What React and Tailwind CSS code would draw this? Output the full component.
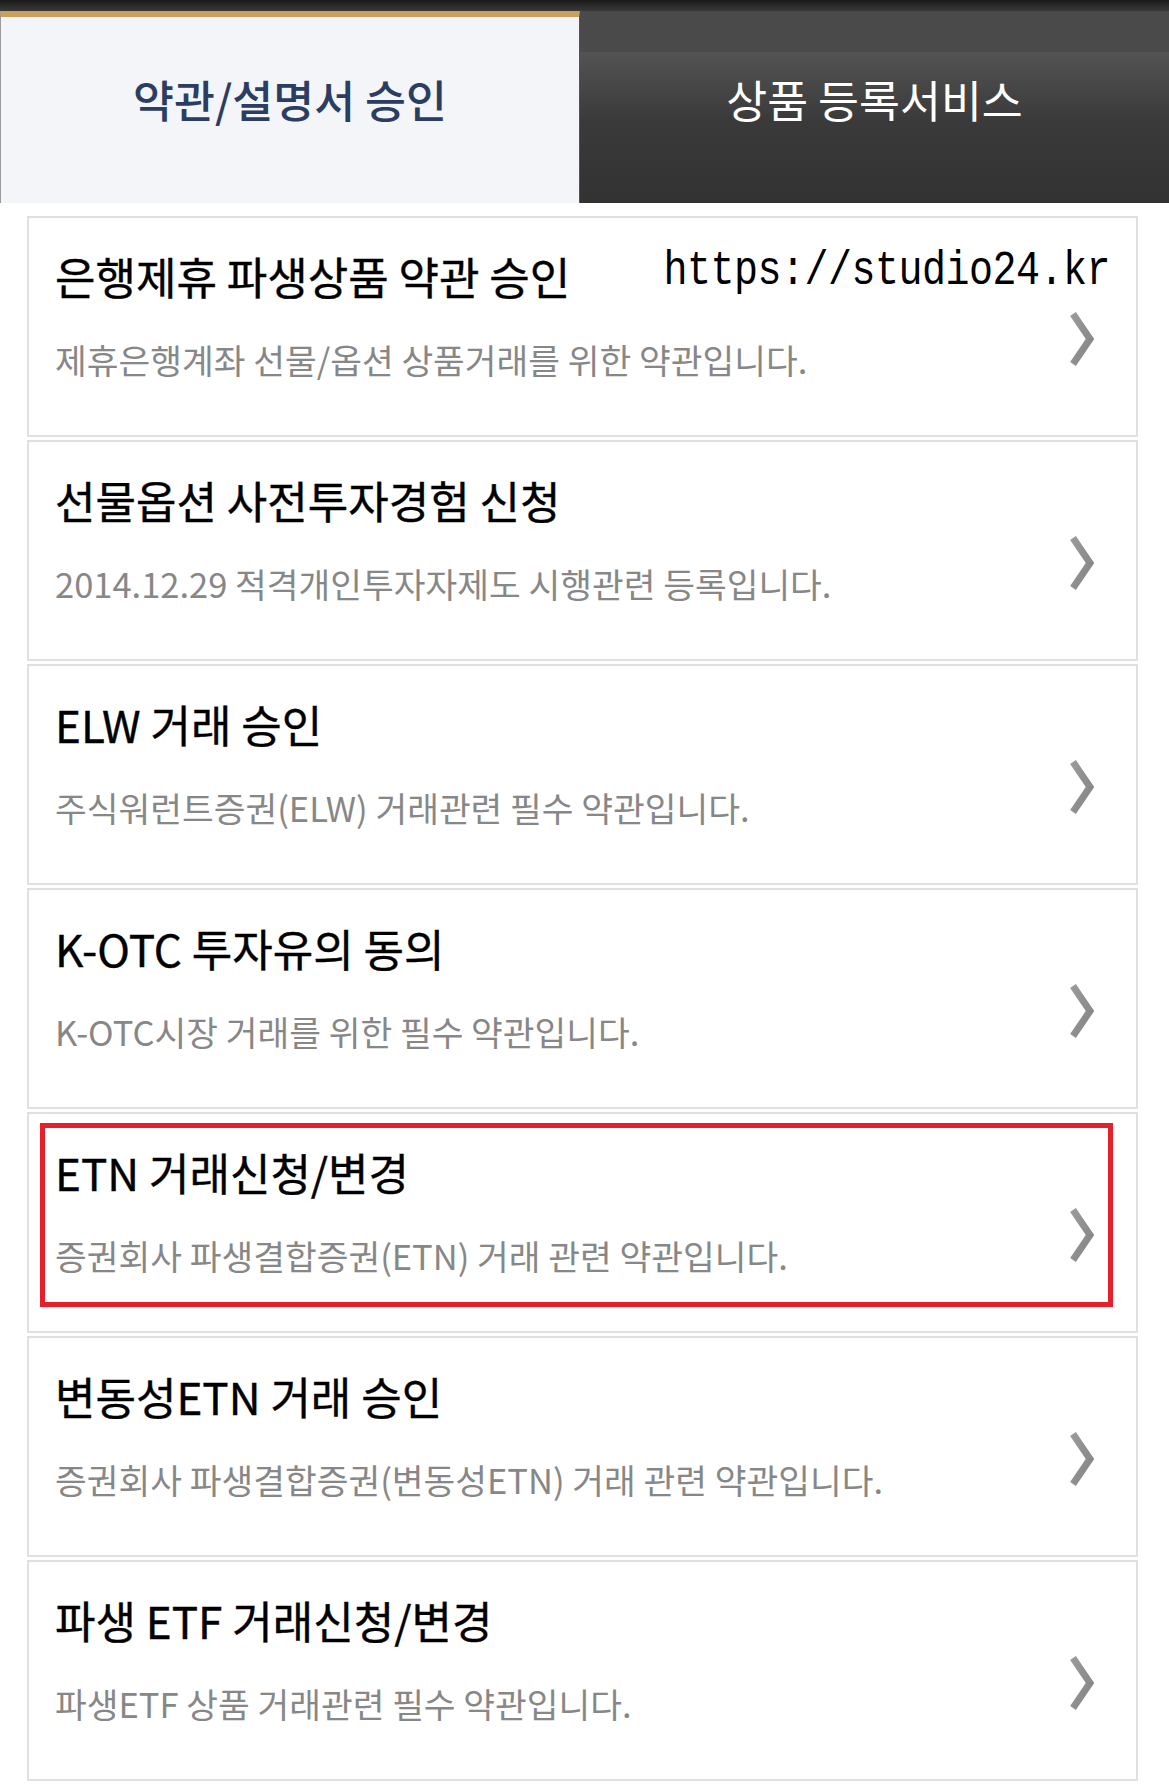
import React from "react";

const items = [
  ["은행제휴 파생상품 약관 승인", "제휴은행계좌 선물/옵션 상품거래를 위한 약관입니다."],
  ["선물옵션 사전투자경험 신청", "2014.12.29 적격개인투자자제도 시행관련 등록입니다."],
  ["ELW 거래 승인", "주식워런트증권(ELW) 거래관련 필수 약관입니다."],
  ["K-OTC 투자유의 동의", "K-OTC시장 거래를 위한 필수 약관입니다."],
  ["ETN 거래신청/변경", "증권회사 파생결합증권(ETN) 거래 관련 약관입니다."],
  ["변동성ETN 거래 승인", "증권회사 파생결합증권(변동성ETN) 거래 관련 약관입니다."],
  ["파생 ETF 거래신청/변경", "파생ETF 상품 거래관련 필수 약관입니다."],
];

function Chevron() {
  return (
    <svg width="28" height="60" viewBox="0 0 28 60" className="shrink-0">
      <defs>
        <linearGradient id="chev" x1="0" y1="0" x2="1" y2="1">
          <stop offset="0" stopColor="#9a9a9a" />
          <stop offset="1" stopColor="#858585" />
        </linearGradient>
      </defs>
      <polyline
        points="5,5 22,30 5,55"
        fill="none"
        stroke="url(#chev)"
        strokeWidth="7"
        strokeLinejoin="miter"
      />
    </svg>
  );
}

export default function App() {
  return (
    <div className="w-[1169px] min-h-[1785px] bg-white font-['Noto_Sans_CJK_KR','Noto_Sans',sans-serif]">
      {/* header tabs */}
      <div className="flex h-[203px] pt-[11px] bg-[linear-gradient(to_bottom,#1a1a1a_0px,#393939_11px,#393939_100%)]">
        <div className="w-[580px] h-full border-t-[6px] border-[#c9a15c] bg-[#f4f5f8] border-l border-l-[#9a9a9a] border-r border-r-[#555] flex items-center justify-center pb-[22px]">
          <span className="text-[44.5px] leading-none text-[#2c3d62] font-medium">약관/설명서 승인</span>
        </div>
        <div className="flex-1 h-full flex items-center justify-center pb-[16px] bg-[linear-gradient(to_bottom,#4a4a4a_0px,#4a4a4a_41px,#535353_41px,#3a3a3a_110px,#323232_100%)]">
          <span className="text-[44.5px] leading-none text-white">상품 등록서비스</span>
        </div>
      </div>

      {/* list */}
      <div className="flex flex-col gap-[3px] pt-[13px] pl-[27px] pr-[31px]">
        {items.map(([title, desc], i) => (
          <div
            key={i}
            className="relative h-[221px] border-2 border-[#e0e0e0] flex items-start pt-[32px] pl-[26px] pr-[40px]"
          >
            <div className="flex-1 flex flex-col">
              <div className="text-[44px] leading-[52px] text-black font-normal [-webkit-text-stroke:0.4px_#000]">{title}</div>
              <div className="mt-[36px] text-[34.5px] leading-[42px] text-[#878787]">{desc}</div>
            </div>
            <div className="mt-[59px]">
              <Chevron />
            </div>
            {i === 0 && (
              <div className="absolute right-[26px] top-[30px] font-['Liberation_Mono',monospace] text-[40px] leading-[48px] text-black tracking-[-0.5px] scale-y-[1.2]">
                https://studio24.kr
              </div>
            )}
            {i === 4 && (
              <div className="absolute left-[11px] top-[9px] w-[1073px] h-[184px] border-[5px] border-[#e61f2b]" />
            )}
          </div>
        ))}
      </div>
    </div>
  );
}
